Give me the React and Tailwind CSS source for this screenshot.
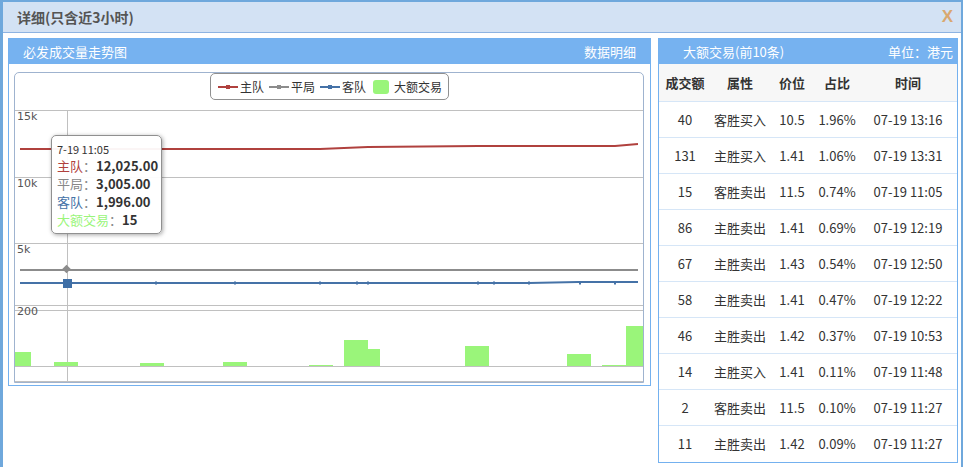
import React from "react";

const rows = [
  ["40", "客胜买入", "10.5", "1.96%", "07-19 13:16"],
  ["131", "主胜买入", "1.41", "1.06%", "07-19 13:31"],
  ["15", "客胜卖出", "11.5", "0.74%", "07-19 11:05"],
  ["86", "主胜卖出", "1.41", "0.69%", "07-19 12:19"],
  ["67", "主胜卖出", "1.43", "0.54%", "07-19 12:50"],
  ["58", "主胜卖出", "1.41", "0.47%", "07-19 12:22"],
  ["46", "主胜卖出", "1.42", "0.37%", "07-19 10:53"],
  ["14", "主胜买入", "1.41", "0.11%", "07-19 11:48"],
  ["2", "客胜卖出", "11.5", "0.10%", "07-19 11:27"],
  ["11", "主胜卖出", "1.42", "0.09%", "07-19 11:27"],
];

const bars = [
  [15, 31, 352],
  [54, 78, 362],
  [140, 164, 363],
  [223, 247, 362],
  [309, 333, 365],
  [344, 368, 340],
  [368, 380, 349],
  [465, 489, 346],
  [567, 591, 354],
  [602, 626, 365],
  [626, 643, 326],
];

const ticks = [156, 235, 320, 357, 368, 478, 494, 529, 580, 615];

function LegendLine({ color }) {
  return (
    <span className="relative shrink-0 w-[20px] h-[2px]" style={{ backgroundColor: color }}>
      <span className="absolute left-[8px] top-[-1px] w-[4px] h-[4px]" style={{ backgroundColor: color }}></span>
    </span>
  );
}

function Chart() {
  return (
    <div className="relative w-[630px] h-[311px] border border-[#9fb3cf] rounded-t-[5px] bg-white overflow-hidden">
      <svg width="628" height="309" viewBox="15 73 628 309" className="block">
        {[110, 177, 243, 305, 310, 366, 381].map((y) => (
          <line key={y} x1="14" x2="643" y1={y + 0.5} y2={y + 0.5} stroke="#c0c0c0" strokeWidth="1" />
        ))}
        <line x1="67.5" x2="67.5" y1="110" y2="381" stroke="#c0c0c0" strokeWidth="1" />
        {bars.map(([x1, x2, top], i) => (
          <rect key={i} x={x1} y={top} width={x2 - x1} height={366 - top} fill="#9af57a" />
        ))}
        <polyline
          points="20,149 320,149 368,147 478,146 615,146 638,144"
          fill="none"
          stroke="#b0413e"
          strokeWidth="2"
        />
        <line x1="20" x2="638" y1="270" y2="270" stroke="#8c8c8c" strokeWidth="2" />
        <polyline
          points="20,283 529,283 578,282 638,282"
          fill="none"
          stroke="#4572a7"
          strokeWidth="2"
        />
        {ticks.map((x) => (
          <rect key={x} x={x - 1} y={281.5} width="2" height="3" fill="#4572a7" />
        ))}
        <rect x="63.5" y="266" width="6" height="6" fill="#8c8c8c" transform="rotate(45 66.5 269)" />
        <rect x="63" y="279" width="9" height="9" fill="#3f6fa6" />
        <text x="17" y="120" fontSize="11" fill="#555" fontFamily="'DejaVu Sans',sans-serif">15k</text>
        <text x="17" y="187" fontSize="11" fill="#555" fontFamily="'DejaVu Sans',sans-serif">10k</text>
        <text x="17" y="253" fontSize="11" fill="#555" fontFamily="'DejaVu Sans',sans-serif">5k</text>
        <text x="17" y="315" fontSize="11" fill="#555" fontFamily="'DejaVu Sans',sans-serif">200</text>
      </svg>

      <div className="absolute left-[195px] top-0 h-[27px] w-[239px] border border-[#909090] rounded-[5px] bg-white flex items-center pl-[7px] text-[12px] text-[#333] whitespace-nowrap">
        <LegendLine color="#b0413e" />
        <span className="ml-[2px] mr-[5px]">主队</span>
        <LegendLine color="#8c8c8c" />
        <span className="ml-[2px] mr-[5px]">平局</span>
        <LegendLine color="#4572a7" />
        <span className="ml-[2px] mr-[7px]">客队</span>
        <span className="shrink-0 w-[16px] h-[14px] rounded-[3px] bg-[#9af57a]"></span>
        <span className="ml-[5px]">大额交易</span>
      </div>

      <div className="absolute left-[36px] top-[62px] w-[111px] h-[99px] border border-[#909090] rounded-[5px] bg-white/95 shadow-[1px_1px_4px_rgba(0,0,0,0.35)] pl-[5px] pt-[6px] text-[13px] leading-[18px] text-[#333] whitespace-nowrap overflow-hidden">
        <div className="text-[11px] leading-[14px] mb-[1px]">7-19 11:05</div>
        <div><span className="text-[#b0413e]">主队</span><span className="text-[#888]">：</span><span className="font-bold">12,025.00</span></div>
        <div><span className="text-[#888]">平局</span><span className="text-[#888]">：</span><span className="font-bold">3,005.00</span></div>
        <div><span className="text-[#4572a7]">客队</span><span className="text-[#888]">：</span><span className="font-bold">1,996.00</span></div>
        <div><span className="text-[#9af57a]">大额交易</span><span className="text-[#888]">：</span><span className="font-bold">15</span></div>
      </div>
    </div>
  );
}

export default function App() {
  return (
    <div
      className="w-[963px] h-[467px] bg-white border-l-[3px] border-t-2 border-r-2 border-[#6fa8dc] overflow-hidden"
      style={{ fontFamily: "'Microsoft YaHei','Noto Sans CJK SC',sans-serif" }}
    >
      <div className="h-[31px] bg-[#d3e2f4] border-b border-[#8db3e2] flex items-center justify-between pl-[14px] pr-[8px]">
        <span className="text-[14px] font-bold text-[#555]">详细(只含近3小时)</span>
        <span className="text-[17px] font-bold text-[#d9a870]" style={{ fontFamily: "'Liberation Sans',sans-serif" }}>X</span>
      </div>
      <div className="flex items-start gap-[7px] pl-[5px] pt-[5px]">
        <div className="w-[643px] h-[348px] border border-[#74b1ef] flex flex-col">
          <div className="h-[25px] bg-[#76b2f0] flex items-center justify-between px-[14px] text-[13px] text-white">
            <span>必发成交量走势图</span>
            <span>数据明细</span>
          </div>
          <div className="pt-[8px] pl-[5px]">
            <Chart />
          </div>
        </div>
        <div className="w-[300px] border border-[#74b1ef]">
          <div className="h-[25px] bg-[#76b2f0] flex items-center justify-between pl-[24px] pr-[4px] text-[13px] text-white">
            <span>大额交易(前10条)</span>
            <span>单位：港元</span>
          </div>
          <div className="grid grid-cols-[52px_58px_46px_44px_98px] h-[38px] items-center bg-[#f7f7f7] border-b border-[#d6e6f7] text-[13px] font-bold text-[#333] text-center">
            <span>成交额</span>
            <span>属性</span>
            <span>价位</span>
            <span>占比</span>
            <span>时间</span>
          </div>
          {rows.map((r, i) => (
            <div
              key={i}
              className={
                "grid grid-cols-[52px_58px_46px_44px_98px] h-[36px] items-center text-[13px] text-[#333] text-center " +
                (i < rows.length - 1 ? "border-b border-[#d6e6f7]" : "")
              }
            >
              {r.map((c, j) => (
                <span key={j}>{c}</span>
              ))}
            </div>
          ))}
        </div>
      </div>
    </div>
  );
}
